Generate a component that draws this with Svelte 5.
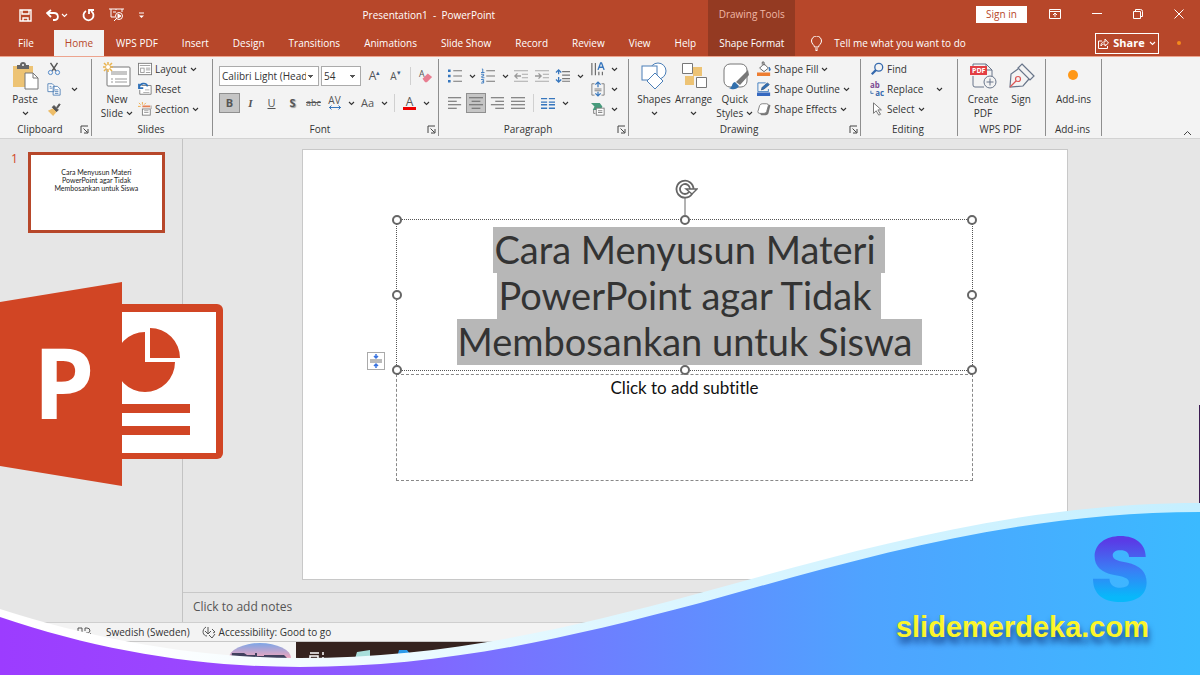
<script lang="ts">
  type Tab = { label: string; active?: boolean };

  const tabs: Tab[] = [
    { label: "File" },
    { label: "Home", active: true },
    { label: "WPS PDF" },
    { label: "Insert" },
    { label: "Design" },
    { label: "Transitions" },
    { label: "Animations" },
    { label: "Slide Show" },
    { label: "Record" },
    { label: "Review" },
    { label: "View" },
    { label: "Help" },
  ];

  const titleLines = ["Cara Menyusun Materi", "PowerPoint agar Tidak", "Membosankan untuk Siswa"];
  const handles = ["nw", "n", "ne", "w", "e", "sw", "s", "se"];

  let fontName = $state("Calibri Light (Headings)");
  let fontSize = $state("54");
</script>

{#snippet chevron()}
  <svg class="chevron" viewBox="0 0 7 5" aria-hidden="true"><path d="M1 1l2.500 2.500L6 1" /></svg>
{/snippet}

{#snippet launcher(label: string)}
  <button class="launcher" aria-label={label}>
    <svg viewBox="0 0 9 9" width="9" height="9"><path d="M1 8V1h7M3.500 3.500l4 4M8 4v4H4" /></svg>
  </button>
{/snippet}

{#snippet icon(name: string)}
  <svg class="icon" viewBox="0 0 16 16" aria-hidden="true">
    {#if name === "cut"}
      <path d="M4 1l6 9M12 1L6 10" stroke="#555" stroke-width="1.600" />
      <circle cx="4" cy="12" r="2.400" stroke="#3f7cc4" /><circle cx="12" cy="12" r="2.400" stroke="#3f7cc4" />
    {:else if name === "copy"}
      <path d="M1 2h5l2 2v7H1zM7 5h5l3 3v7H7z" fill="#fff" stroke="#4f7fb5" />
      <path d="M3 5h2M3 7h3M9 9h4M9 11h4M9 13h4" stroke="#4f7fb5" />
    {:else if name === "painter"}
      <path d="M1 10l6-3 4 4-4 5z" fill="#edbd69" stroke="none" />
      <path d="M6 6l5 5 2-2-5-5zM11 6l3-4 1 1-3 4z" fill="#555" stroke="#555" />
    {:else if name === "layout"}
      <rect x="0.500" y="1.500" width="15" height="13" fill="#fff" stroke="#777" />
      <path d="M2 4h12M9 7h5M9 9h5M9 12h5" stroke="#999" /><rect x="3" y="7" width="4" height="5" stroke="#999" />
    {:else if name === "reset"}
      <path d="M4 4h11v10H2V9" fill="#fff" stroke="#777" /><path d="M8 9h5M6 12h7" stroke="#aaa" />
      <path d="M1 2v5h5M1 7c1-6 8-7 10-2" stroke="#2d6fb7" stroke-width="1.800" />
    {:else if name === "section"}
      <path d="M1 1l2 2M5 0v3M9 1L7 3M0 5h3" stroke="#eaa53f" /><path d="M5 5h9" stroke="#e68052" stroke-width="2" />
      <rect x="5" y="8" width="9" height="7" fill="#fff" stroke="#777" /><path d="M7 10h5M7 12h5M15 4v4" stroke="#999" />
    {:else if name === "eraser"}
      <text x="0" y="9" fill="#555" font-size="10" stroke="none">A</text>
      <path d="M4 11l6-6 5 4-6 6H7z" fill="#e87e91" stroke="none" />
    {:else if name === "bullets"}
      <path d="M6 2h10M6 8h10M6 14h10" stroke="#777" stroke-width="1.400" />
      <path d="M0 2h3M0 8h3M0 14h3" stroke="#3676bd" stroke-width="3" />
    {:else if name === "numbers"}
      <path d="M6 2h10M6 8h10M6 14h10" stroke="#777" stroke-width="1.400" />
      <path d="M1 0h1v4M0 4h4M0 6h3v2H1v2h3M0 12h3v4H0M1 14h2" stroke="#3676bd" />
    {:else if name === "outdent" || name === "indent"}
      <path d="M0 2h16M9 6h7M9 10h7M0 14h16" stroke="#aaa" stroke-width="1.300" />
      <path d={name === "outdent" ? "M8 8H1M4 5L1 8l3 3" : "M0 8h7M4 5l3 3-3 3"} stroke="#999" stroke-width="1.500" />
    {:else if name === "spacing"}
      <path d="M7 3h9M7 7h9M7 11h9M7 14h9" stroke="#777" stroke-width="1.300" />
      <path d="M3 1v5M0 4l3-3 3 3M3 9v6M0 12l3 3 3-3" stroke="#3676bd" stroke-width="1.500" />
    {:else if name === "left"}
      <path d="M0 2h15M0 6h10M0 10h15M0 14h10" stroke="#666" stroke-width="1.300" />
    {:else if name === "center"}
      <path d="M0 2h16M3 6h10M0 10h16M3 14h10" stroke="#666" stroke-width="1.300" />
    {:else if name === "right"}
      <path d="M1 2h15M6 6h10M1 10h15M6 14h10" stroke="#666" stroke-width="1.300" />
    {:else if name === "justify"}
      <path d="M0 2h16M0 6h16M0 10h16M0 14h16" stroke="#666" stroke-width="1.300" />
    {:else if name === "columns"}
      <path d="M0 3h7M0 7h7M0 10h7M0 14h7M9 3h7M9 7h7M9 10h7M9 14h7" stroke="#3676bd" stroke-width="1.500" />
    {:else if name === "direction"}
      <path d="M1 1v14M5 1v14M9 11v4M13 11v4" stroke="#666" stroke-width="1.300" />
      <path d="M8 9l3-8h1l3 8M9 6h5" stroke="#3676bd" stroke-width="1.600" />
    {:else if name === "align-text"}
      <path d="M4 2H1v13h3M12 2h3v13h-3M4 8h8M4 10h8" stroke="#777" />
      <path d="M8 0v6M5 3l3-3 3 3M8 11v5M5 13l3 3 3-3" stroke="#3676bd" stroke-width="1.400" />
    {:else if name === "smartart"}
      <path d="M0 1h10l3 4-2 4H2l2-4z" fill="#479b7c" stroke="none" />
      <rect x="6" y="7" width="9" height="8" fill="#fff" stroke="#777" /><path d="M8 10h5M8 12h5M3 9v4h2" stroke="#777" />
    {:else if name === "fill"}
      <path d="M3 7l5-5 5 5-5 4zM6 3V0h2v4" fill="#fff" stroke="#555" /><path d="M14 6c2 3 1 4 0 4z" fill="#2d6fb7" stroke="#2d6fb7" />
      <rect x="0" y="12" width="15" height="4" fill="#ed7d31" stroke="none" />
    {:else if name === "outline"}
      <path d="M10 1H1v10h12V8" stroke="#3676bd" /><path d="M5 9l1-3 6-5 2 2-6 5z" fill="#2d6fb7" stroke="#3a5f8a" />
      <rect x="0" y="12" width="15" height="4" fill="#3568c0" stroke="none" />
    {:else if name === "effects"}
      <path d="M12 3h2q2 0 1 2l-2 8q-1 2-3 2H5l-2-2z" fill="#777" stroke="none" />
      <path d="M6 2h5q2 0 2 2l-2 7q-1 2-3 2H3q-2 0-2-2l2-7q1-2 3-2z" fill="#fff" stroke="#777" />
    {:else if name === "find"}
      <circle cx="10" cy="6" r="4.500" stroke="#3569ad" stroke-width="1.500" /><path d="M7 9l-5 5" stroke="#3569ad" stroke-width="2.500" />
    {:else if name === "replace"}
      <text x="0" y="7" fill="#7c4b92" font-size="9" font-weight="700" stroke="none">ab</text>
      <text x="6" y="16" fill="#3569ad" font-size="9" font-weight="700" stroke="none">ac</text>
      <path d="M1 10v3h3" stroke="#3569ad" />
    {:else if name === "select"}
      <path d="M4 1v12l3-3 3 5 2-1-3-5h4z" fill="#fff" stroke="#666" />
    {/if}
  </svg>
{/snippet}

{#snippet action(name: string, label: string, menu = false)}
  <button class="action">{@render icon(name)}<span>{label}</span>{#if menu}{@render chevron()}{/if}</button>
{/snippet}

{#snippet tool(name: string, label: string, pressed = false)}
  <button class="tool" class:pressed aria-label={label} aria-pressed={pressed}>{@render icon(name)}</button>
{/snippet}

{#snippet more(label: string)}
  <button class="more" aria-label={label}>{@render chevron()}</button>
{/snippet}

<div class="window">
  <header>
    <div class="title-row">
      <nav class="quick" aria-label="Quick access">
        <button aria-label="Save">
          <svg viewBox="0 0 13 13" width="13" height="13"><path d="M1 1h11v11H1zM3 1v4h7V1M4 12V9h5v3" stroke-width="1.400" /></svg>
        </button>
        <button aria-label="Undo" class="undo">
          <svg viewBox="0 0 13 13" width="13" height="13"><path d="M5 1L1 4l4 4M1 4h7c5 0 5 7 1 7H7" stroke-width="1.800" /></svg>
          {@render chevron()}
        </button>
        <button aria-label="Redo">
          <svg viewBox="0 0 13 13" width="13" height="13"><path d="M4 2a5 5 0 1 0 5 0M7 5V1h5" stroke-width="1.800" /></svg>
        </button>
        <button aria-label="Start slide show">
          <svg viewBox="0 0 15 14" width="15" height="14"><path d="M0 1h15M2 1v8h4M7 1v1M5 13l3-3M4 4h3M13 1v3" /><circle cx="10" cy="8" r="3.500" /><path d="M9 6v4l3-2z" fill="#fff" /></svg>
        </button>
        <button aria-label="Customize toolbar">
          <svg viewBox="0 0 7 7" width="7" height="7"><path d="M1 1h5" /><path d="M1 3.500h5L3.500 6z" fill="#fff" stroke="none" /></svg>
        </button>
      </nav>
      <span class="doc-title">Presentation1&nbsp; -&nbsp; PowerPoint</span>
    </div>
    <div class="context-title">Drawing Tools</div>
    <div class="window-row">
      <button class="sign-in">Sign in</button>
      <button aria-label="Ribbon display options">
        <svg viewBox="0 0 12 10" width="12" height="10"><path d="M.5.500h11v9H.500zM.500 2.500h11M6 8V4M4 6l2-2 2 2" /></svg>
      </button>
      <button aria-label="Minimize"><svg viewBox="0 0 10 10" width="10" height="10"><path d="M0 4.500h10" /></svg></button>
      <button aria-label="Restore"><svg viewBox="0 0 10 10" width="10" height="10"><path d="M.500 2.500h7v7h-7zM2.500 2.500v-2h5q2 0 2 2v5h-2" /></svg></button>
      <button aria-label="Close"><svg viewBox="0 0 10 10" width="10" height="10"><path d="M.500.500l9 9M9.500.500l-9 9" /></svg></button>
    </div>

    <nav class="tabs" aria-label="Ribbon tabs">
      {#each tabs as tab}
        <button class="tab" class:active={tab.active}>{tab.label}</button>
      {/each}
    </nav>
    <button class="tab context">Shape Format</button>
    <div class="tell-row">
      <button class="tell">
        <svg viewBox="0 0 11 15" width="11" height="15"><path d="M3.500 11c0-2-3-3-3-6a5 5 0 0 1 10 0c0 3-3 4-3 6zM4 13h3M4.500 14.500h2" /></svg>
        Tell me what you want to do
      </button>
      <button class="share">
        <svg viewBox="0 0 11 11" width="11" height="11"><path d="M4 3H.500v7.500h9V8M3 8c0-4 2-4 4-4V1l3.500 4L7 8V6C5 6 4 6 3 8z" /></svg>
        <b>Share</b>{@render chevron()}
      </button>
      <i class="notice"></i>
    </div>
  </header>

  <section class="ribbon" aria-label="Home">
    <div class="group clipboard">
      <div class="body">
        <button class="big">
          <svg viewBox="0 0 28 28" width="28" height="28">
            <path d="M2 4h20v21H2z" fill="#edc374" /><path d="M6 3h3a3 3 0 0 1 6 0h3v4H6z" fill="#666" />
            <circle cx="12" cy="3" r="1" fill="#fff" /><path d="M14 11h8l5 5v11H14z" fill="#fff" stroke="#777" /><path d="M22 11v5h5" fill="none" stroke="#777" />
          </svg>
          Paste<span>{@render chevron()}</span>
        </button>
        <div class="stack">
          {@render tool("cut", "Cut")}
          <div class="pair">{@render tool("copy", "Copy")}{@render more("Copy options")}</div>
          {@render tool("painter", "Format painter")}
        </div>
      </div>
      <footer><span>Clipboard</span>{@render launcher("Clipboard settings")}</footer>
    </div>

    <div class="group slides">
      <div class="body">
        <button class="big">
          <svg viewBox="0 0 28 28" width="28" height="28">
            <rect x="4" y="5" width="23" height="19" rx="1" fill="#fff" stroke="#777" /><path d="M8 9h16v4H8z" fill="#c7c7c7" />
            <path d="M8 17h2M12 17h12M8 20h2M12 20h12" stroke="#999" />
            <path d="M5 0v10M0 5h10M1 1l8 8M9 1L1 9" stroke="#e9b34e" stroke-width="1.500" /><circle cx="5" cy="5" r="2" fill="#fff" />
          </svg>
          New<span>Slide {@render chevron()}</span>
        </button>
        <div class="stack">
          {@render action("layout", "Layout", true)}
          {@render action("reset", "Reset")}
          {@render action("section", "Section", true)}
        </div>
      </div>
      <footer><span>Slides</span></footer>
    </div>

    <div class="group font">
      <div class="body rows">
        <div class="line">
          <select class="name" aria-label="Font" bind:value={fontName}><option>Calibri Light (Headings)</option></select>
          <select class="size" aria-label="Font size" bind:value={fontSize}><option>54</option></select>
          <button class="tool glyph grow" aria-label="Increase font size">A<sup>▴</sup></button>
          <button class="tool glyph shrink" aria-label="Decrease font size">A<sup>▾</sup></button>
          <i class="rule"></i>
          {@render tool("eraser", "Clear formatting")}
        </div>
        <div class="line">
          <button class="tool glyph pressed" aria-label="Bold" aria-pressed="true"><b>B</b></button>
          <button class="tool glyph italic" aria-label="Italic">I</button>
          <button class="tool glyph" aria-label="Underline"><u>U</u></button>
          <button class="tool glyph shadow" aria-label="Text shadow"><b>S</b></button>
          <button class="tool glyph strike" aria-label="Strikethrough"><s>abc</s></button>
          <button class="tool glyph kern" aria-label="Character spacing">
            AV<svg viewBox="0 0 14 5" width="14" height="5"><path d="M1 2.500h12M3.500.500l-2 2 2 2M10.500.500l2 2-2 2" /></svg>
          </button>
          {@render more("Character spacing options")}
          <button class="tool glyph case" aria-label="Change case">Aa</button>
          {@render more("Case options")}
          <i class="rule"></i>
          <button class="tool glyph ink" aria-label="Font color"><span>A</span></button>
          {@render more("Font colors")}
        </div>
      </div>
      <footer><span>Font</span>{@render launcher("Font settings")}</footer>
    </div>

    <div class="group paragraph">
      <div class="body">
        <div class="rows">
          <div class="line">
            {@render tool("bullets", "Bullets")}{@render more("Bullet styles")}
            {@render tool("numbers", "Numbering")}{@render more("Number styles")}
            {@render tool("outdent", "Decrease indent")}
            {@render tool("indent", "Increase indent")}
            {@render tool("spacing", "Line spacing")}{@render more("Line spacing options")}
          </div>
          <div class="line">
            {@render tool("left", "Align left")}
            {@render tool("center", "Center", true)}
            {@render tool("right", "Align right")}
            {@render tool("justify", "Justify")}
            <i class="rule"></i>
            {@render tool("columns", "Columns")}{@render more("Column options")}
          </div>
        </div>
        <div class="stack">
          <div class="pair">{@render tool("direction", "Text direction")}{@render more("Direction options")}</div>
          <div class="pair">{@render tool("align-text", "Align text")}{@render more("Align options")}</div>
          <div class="pair">{@render tool("smartart", "Convert to SmartArt")}{@render more("SmartArt options")}</div>
        </div>
      </div>
      <footer><span>Paragraph</span>{@render launcher("Paragraph settings")}</footer>
    </div>

    <div class="group drawing">
      <div class="body">
        <button class="big">
          <svg viewBox="0 0 28 28" width="28" height="28" fill="#fff" stroke="#4b7fb8">
            <circle cx="18" cy="9" r="8" /><rect x="2" y="4" width="15" height="14" /><path d="M15 11l8 8-8 8-8-8z" />
          </svg>
          Shapes<span>{@render chevron()}</span>
        </button>
        <button class="big">
          <svg viewBox="0 0 28 28" width="28" height="28">
            <path d="M13 5h9v9h-9zM5 14h9v9H5z" fill="#edc374" /><path d="M2.500 1.500h10v10h-10zM16.500 15.500h10v10h-10z" fill="#fff" stroke="#777" />
          </svg>
          Arrange<span>{@render chevron()}</span>
        </button>
        <button class="big">
          <svg viewBox="0 0 28 28" width="28" height="28">
            <rect x="3" y="2" width="23" height="23" rx="6" fill="#fff" stroke="#777" />
            <path d="M8 26c4 0 2-5 6-6l4 4c-2 4-7 4-10 2z" fill="#3270ad" /><path d="M15 20L27 8l1 5-9 10z" fill="#777" />
          </svg>
          Quick<span>Styles {@render chevron()}</span>
        </button>
        <div class="stack">
          {@render action("fill", "Shape Fill", true)}
          {@render action("outline", "Shape Outline", true)}
          {@render action("effects", "Shape Effects", true)}
        </div>
      </div>
      <footer><span>Drawing</span>{@render launcher("Drawing settings")}</footer>
    </div>

    <div class="group editing">
      <div class="body">
        <div class="stack">
          {@render action("find", "Find")}
          <div class="pair spread">{@render action("replace", "Replace")}{@render more("Replace options")}</div>
          {@render action("select", "Select", true)}
        </div>
      </div>
      <footer><span>Editing</span></footer>
    </div>

    <div class="group wps">
      <div class="body">
        <button class="big">
          <svg viewBox="0 0 28 28" width="28" height="28">
            <path d="M4 14v9q0 2 2 2h9M4 4V2h13l6 6v7M17 2v6h6" fill="none" stroke="#68758a" />
            <rect x="1" y="4" width="17" height="9" fill="#e23e44" /><text x="3" y="11" font-size="7" font-weight="700" fill="#fff">PDF</text>
            <circle cx="21" cy="20" r="6" fill="#f3f3f3" stroke="#68758a" /><path d="M17.500 20h7M21 16.500v7" stroke="#68758a" />
          </svg>
          Create<span>PDF</span>
        </button>
        <button class="big">
          <svg viewBox="0 0 28 28" width="28" height="28" fill="none" stroke="#68758a" stroke-width="1.200">
            <path d="M15 2l12 12-4 4L11 6zM11 7l-7 5-1 13 13-1 6-7" /><path d="M3 25l6-6" stroke="#d55" /><circle cx="11" cy="17" r="2.500" stroke="#d55" />
          </svg>
          Sign
        </button>
      </div>
      <footer><span>WPS PDF</span></footer>
    </div>

    <div class="group addins">
      <div class="body">
        <button class="big">
          <svg viewBox="0 0 28 28" width="28" height="28"><circle cx="14" cy="13" r="5" fill="#ff9716" /></svg>
          Add-ins
        </button>
      </div>
      <footer><span>Add-ins</span></footer>
    </div>

    <button class="collapse" aria-label="Collapse ribbon">
      <svg viewBox="0 0 9 6" width="9" height="6"><path d="M1 5l3.500-3.500L8 5" /></svg>
    </button>
  </section>

  <div class="workspace">
    <aside>
      <span class="number">1</span>
      <div class="thumb">
        {#each titleLines as line}<p>{line}</p>{/each}
      </div>
    </aside>
    <main>
      <div class="stage">
        <article class="slide">
          <div class="title-box">
            {#each titleLines as line}<p><mark>{line}</mark></p>{/each}
            {#each handles as handle}<i class="handle {handle}"></i>{/each}
            <svg class="rotate" viewBox="0 0 24 36" width="24" height="36">
              <path d="M11 18v18" stroke-width="1" /><path d="M18 15a8.500 8.500 0 1 1 1.500-5M15 13a5 5 0 1 1 1-3" /><path d="M12 10h11l-5 5z" fill="#fff" stroke-width="1.400" />
            </svg>
            <button class="autofit" aria-label="AutoFit options">
              <svg viewBox="0 0 14 14" width="14" height="14"><path d="M1 6h12M1 8h12" stroke="#777" /><path d="M7 0v4M5 2l2 2 2-2M7 14v-4M5 12l2-2 2 2" stroke="#3973e0" stroke-width="1.500" /></svg>
            </button>
          </div>
          <div class="subtitle-box">Click to add subtitle</div>
        </article>
      </div>
      <div class="notes">Click to add notes</div>
    </main>
  </div>

  <div class="status">
    <svg viewBox="0 0 14 10" width="14" height="10"><path d="M1 6V1h4v5M8 4V1h2q3 0 3 3-1 3-4 2M9 7l2 2 3-3" /></svg>
    <span>Swedish (Sweden)</span>
    <svg class="access" viewBox="0 0 14 13" width="14" height="13"><path d="M4 1C-1 4 1 10 5 10M6 1v7M3 5l3 3 3-3M10 3l3 3-2 1M7 9l3 3 3-4" /></svg>
    <span>Accessibility: Good to go</span>
  </div>

  <div class="taskbar">
    <div class="search">
      <svg viewBox="0 0 64 33" width="64" height="33">
        <defs><linearGradient id="sky" x2="0" y2="1"><stop stop-color="#7da5e6" /><stop offset="0.500" stop-color="#f0a5bd" /></linearGradient></defs>
        <ellipse cx="32" cy="16" rx="31" ry="15" fill="url(#sky)" /><path d="M4 11h12l3 2h8v-2h2v3h7v-1h20l4 4H3z" fill="#41405e" />
      </svg>
    </div>
    <div class="apps">
      <svg viewBox="0 0 120 20" width="120" height="20" fill="none">
        <path d="M14 11h9M14 14v6h8v-6zM27 10v3M27 15v5" stroke="#fff" stroke-width="1.500" />
        <path d="M61 10l13-2v12H58z" fill="#a8dedb" /><path d="M103 8h8l3 4h-12z" fill="#2d9bea" />
      </svg>
    </div>
  </div>

  <svg class="app-logo" viewBox="0 0 224 204" width="224" height="204" aria-hidden="true">
    <rect x="100" y="22" width="123" height="155" rx="6" fill="#d14524" /><path d="M110 30h106v141H110z" fill="#fff" />
    <path d="M145 50a30 30 0 1 0 30 30h-30zM150 46v30h30a30 30 0 0 0-30-30z" fill="#d14524" />
    <path d="M110 122h80v9h-80zM110 144h80v9h-80z" fill="#d14524" />
    <path d="M0 20L122 0v204L0 184z" fill="#d14524" />
    <text x="33" y="137">P</text>
  </svg>

  <div class="banner">
    <svg viewBox="0 500 1200 175" preserveAspectRatio="none" aria-hidden="true">
      <defs>
        <linearGradient id="wave"><stop stop-color="#9c3cff" /><stop offset="0.200" stop-color="#994aff" /><stop offset="0.420" stop-color="#7872ff" /><stop offset="0.720" stop-color="#4fa3ff" /><stop offset="1" stop-color="#3bbaff" /></linearGradient>
        <linearGradient id="edge"><stop offset="0.100" stop-color="#fff" /><stop offset="0.500" stop-color="#dff7ff" /><stop offset="1" stop-color="#c5efff" /></linearGradient>
      </defs>
      <path d="M0 609C100 641 200 658 300 658C440 658 560 631 700 593C860 549 1020 503 1200 503V675H0z" fill="url(#edge)" />
      <path d="M0 617C100 651 200 667 300 667C440 667 560 640 700 603C860 558 1020 512 1200 512V675H0z" fill="url(#wave)" />
    </svg>
    <div class="brand">
      <span class="mark">S</span>
      <strong>slidemerdeka.com</strong>
    </div>
  </div>
</div>

<style>
  :global(body) {
    background: #e6e6e6;
  }

  .window {
    color: #333;
    display: flex;
    flex-direction: column;
    font-family: "Open Sans", "Noto Sans", sans-serif;
    font-size: 10px;
    line-height: 14px;
    min-height: 100vh;
    overflow: hidden;
    position: relative;
  }

  .window * {
    box-sizing: border-box;
  }

  button {
    align-items: center;
    background: none;
    border: 0;
    color: inherit;
    display: flex;
    flex: none;
    font: inherit;
    justify-content: center;
    padding: 0;
    white-space: nowrap;
  }

  svg {
    display: block;
    flex: none;
  }

  p {
    margin: 0;
  }

  .chevron {
    fill: none;
    height: 5px;
    stroke: currentColor;
    stroke-width: 1.1;
    width: 7px;
  }

  .icon {
    fill: none;
    height: 14px;
    overflow: visible;
    width: 14px;
  }

  header {
    background: #b7472a;
    border-bottom: 1px solid #eda48e;
    color: #fff;
    display: grid;
    grid-template-columns: auto auto 1fr;
    grid-template-rows: 30px 26px;
  }

  header svg {
    fill: none;
    stroke: #fff;
  }

  .title-row {
    align-items: center;
    display: flex;
    justify-content: space-between;
  }

  .quick {
    align-items: center;
    display: flex;
    gap: 14px;
    padding-left: 19px;
  }

  .undo {
    gap: 2px;
  }

  .doc-title {
    padding-right: 213px;
  }

  .context-title {
    background: #943a22;
    color: #f0b7a6;
    padding-top: 7px;
    text-align: center;
  }

  .window-row {
    align-items: center;
    display: flex;
    gap: 31px;
    justify-content: flex-end;
    padding: 0 16px 2px 0;
  }

  .sign-in {
    background: #fff;
    color: #b7472a;
    height: 17px;
    margin-right: -9px;
    width: 51px;
  }

  .tabs {
    display: flex;
    padding-left: 6px;
  }

  .tab {
    height: 26px;
    padding: 0 12px;
  }

  .tab:first-child {
    margin-right: 8px;
  }

  .tab.active {
    background: #f3f3f3;
    color: #b7472a;
    padding: 0 11px;
  }

  .tab.context {
    background: #943a22;
    padding: 0 11px;
  }

  .tell-row {
    align-items: center;
    display: flex;
    padding: 0 19px 0 16px;
  }

  .tell {
    gap: 12px;
    margin-right: auto;
  }

  .share {
    border: 1px solid #fff;
    font-size: 11px;
    gap: 4px;
    height: 21px;
    width: 64px;
  }

  .notice {
    background: #f58a1c;
    border-radius: 50%;
    height: 4px;
    margin-left: 18px;
    width: 4px;
  }

  .ribbon {
    background: #f3f3f3;
    border-bottom: 1px solid #d2d2d2;
    display: flex;
    height: 82px;
    padding: 2px 0;
  }

  .group {
    border-right: 1px solid #8e8e8e;
    display: flex;
    flex: none;
    flex-direction: column;
  }

  .body {
    display: flex;
    flex: 1;
  }

  .group footer {
    display: flex;
    height: 14px;
    line-height: 14px;
    padding-right: 2px;
  }

  .group footer span {
    flex: 1;
    text-align: center;
  }

  .launcher svg,
  .collapse svg {
    fill: none;
    stroke: #444;
  }

  .clipboard { width: 92px; }
  .slides { width: 121px; }
  .font { width: 226px; }
  .paragraph { width: 190px; }
  .drawing { width: 232px; }
  .editing { width: 97px; }
  .wps { width: 88px; }
  .addins { width: 56px; }

  .clipboard .body { gap: 2px; padding-left: 8px; }
  .slides .body { gap: 4px; padding-left: 8px; }
  .font .body { padding-left: 6px; }
  .paragraph .body { justify-content: space-between; padding: 0 8px 0 6px; }
  .drawing .body { gap: 4px; padding-left: 8px; }
  .editing .body { padding-left: 9px; }
  .wps .body { gap: 4px; padding-left: 8px; }
  .addins .body { justify-content: center; }

  .big {
    align-items: center;
    flex-direction: column;
    justify-content: flex-start;
    min-width: 34px;
    padding-top: 3px;
  }

  .big > svg {
    margin-bottom: 2px;
  }

  .big span {
    align-items: center;
    display: flex;
    gap: 3px;
    height: 14px;
  }

  .stack > * {
    height: 20px;
  }

  .pair {
    display: flex;
  }

  .pair > * {
    height: 20px;
  }

  .action {
    gap: 3px;
  }

  .spread {
    gap: 10px;
  }

  .tool {
    height: 20px;
    width: 20px;
  }

  .font .tool {
    width: 21px;
  }

  .more {
    width: 12px;
  }

  .clipboard .more {
    margin-left: 4px;
  }

  .rows {
    display: flex;
    flex-direction: column;
    gap: 7px;
    padding-top: 7px;
  }

  .line {
    align-items: center;
    display: flex;
    height: 20px;
  }

  .rule {
    background: #d0d0d0;
    height: 18px;
    margin: 0 4px;
    width: 1px;
  }

  .paragraph .line .tool {
    margin-right: 1px;
  }

  .pressed {
    background: #c5c5c5;
    border: 1px solid #8f8f8f;
  }

  select {
    appearance: none;
    background:
      conic-gradient(from 315deg at 50% 100%, #555 90deg, transparent 0) right 5px center / 5px 3px no-repeat,
      #fff;
    border: 1px solid #ababab;
    border-radius: 0;
    color: #333;
    font: inherit;
    height: 20px;
    padding: 0 12px 0 2px;
  }

  .name {
    margin-right: 2px;
    width: 100px;
  }

  .size {
    margin-right: 3px;
    width: 40px;
  }

  .glyph {
    color: #555;
    font-size: 11px;
  }

  .grow {
    font-size: 12px;
  }

  .shrink {
    font-size: 10px;
  }

  sup {
    color: #3d5e88;
    font-size: 7px;
    line-height: 7px;
    margin-bottom: 7px;
  }

  .italic {
    font-family: "Liberation Serif", serif;
    font-style: italic;
    font-weight: 700;
  }

  .shadow {
    text-shadow: 1px 1px 1px #999;
  }

  .strike {
    font-size: 9px;
  }

  .kern {
    flex-direction: column;
    font-size: 10px;
    line-height: 9px;
  }

  .kern svg {
    fill: none;
    stroke: #3676bd;
  }

  .ink span {
    border-bottom: 3px solid #e00;
    font-size: 12px;
    line-height: 11px;
    padding: 0 3px;
  }

  .collapse {
    align-self: flex-end;
    margin: 0 8px 0 auto;
  }

  .workspace {
    background: linear-gradient(transparent 55%, #3b1b52 0) right / 1px 100% no-repeat, #e6e6e6;
    display: flex;
    flex: 1;
  }

  aside {
    border-right: 1px solid #c3c3c3;
    display: flex;
    flex: none;
    gap: 10px;
    padding: 13px 0 0 11px;
    width: 183px;
  }

  .number {
    color: #d14524;
    font-size: 12px;
  }

  .thumb {
    background: #fff;
    border: 3px solid #b7472a;
    color: #222;
    font-family: Lato, sans-serif;
    font-size: 7px;
    height: 81px;
    line-height: 8px;
    padding-top: 13px;
    text-align: center;
    width: 137px;
  }

  main {
    display: flex;
    flex: 1;
    flex-direction: column;
  }

  .stage {
    flex: 1;
    padding: 10px 132px 12px 119px;
  }

  .slide {
    aspect-ratio: 766 / 431;
    background: #fff;
    border: 1px solid #c8c8c8;
    color: #333;
    font-family: Lato, sans-serif;
    font-variant-ligatures: none;
    padding: 69px 94px 0 93px;
  }

  .title-box {
    border: 1px dotted #555;
    font-size: 38px;
    height: 152px;
    line-height: 44px;
    padding-top: 7px;
    position: relative;
    text-align: center;
    white-space: nowrap;
  }

  mark {
    background: #b7b7b7;
    color: inherit;
    display: inline-block;
    height: 46px;
    margin-right: -9px;
    padding: 0 9px 0 1px;
  }

  .title-box p {
    height: 46px;
  }

  .handle {
    background: #fff;
    border: 2px solid #666;
    border-radius: 50%;
    height: 10px;
    left: calc(50% - 5px);
    position: absolute;
    top: calc(50% - 5px);
    width: 10px;
  }

  .nw, .n, .ne { top: -5px; }
  .sw, .s, .se { top: calc(100% - 5px); }
  .nw, .w, .sw { left: -5px; }
  .ne, .e, .se { left: calc(100% - 5px); }

  .rotate {
    fill: none;
    left: calc(50% - 11px);
    position: absolute;
    stroke: #666;
    stroke-width: 1.8;
    top: -41px;
  }

  .autofit {
    background: #fff;
    border: 1px solid #aaa;
    bottom: 0;
    height: 18px;
    left: -30px;
    position: absolute;
    width: 18px;
  }

  .autofit svg {
    fill: none;
  }

  .subtitle-box {
    border: 1px dashed #888;
    color: #111;
    font-size: 17px;
    height: 107px;
    line-height: 24px;
    margin-top: 3px;
    padding-top: 1px;
    text-align: center;
  }

  .notes {
    border-top: 1px solid #c8c8c8;
    color: #555;
    font-size: 12px;
    height: 30px;
    line-height: 28px;
    padding-left: 10px;
  }

  .status {
    align-items: center;
    background: #f3f3f3;
    border-top: 1px solid #cfcfcf;
    display: flex;
    height: 19px;
    padding-left: 77px;
  }

  .status svg {
    fill: none;
    margin-right: 15px;
    stroke: #555;
  }

  .status .access {
    margin: 0 3px 0 12px;
  }

  .taskbar {
    background: #f5f5f5;
    border-top: 1px solid #c8c8c8;
    display: flex;
    height: 34px;
  }

  .search {
    display: flex;
    flex: none;
    justify-content: flex-end;
    padding-right: 4px;
    width: 296px;
  }

  .apps {
    background: #35231f;
    flex: 1;
  }

  .app-logo {
    left: 0;
    position: absolute;
    top: 282px;
  }

  .app-logo text {
    fill: #fff;
    font-family: "Liberation Sans Narrow", "Open Sans", sans-serif;
    font-size: 98px;
    font-weight: 700;
  }

  .banner {
    bottom: 0;
    height: 175px;
    left: 0;
    position: absolute;
    right: 0;
  }

  .banner > svg {
    height: 100%;
    width: 100%;
  }

  .brand {
    align-items: flex-end;
    bottom: 30px;
    display: flex;
    flex-direction: column;
    position: absolute;
    right: 51px;
  }

  .mark {
    background: linear-gradient(#5a3be6 15%, #3b7cf5 50%, #08b8fa 85%);
    background-clip: text;
    color: transparent;
    font-family: Inter, sans-serif;
    font-size: 88px;
    font-weight: 900;
    line-height: 80px;
  }

  strong {
    color: #fbf52b;
    font-family: "Liberation Sans", Arial, sans-serif;
    font-size: 29px;
    line-height: 36px;
    text-shadow: 1px 6px 6px #16438b;
  }
</style>
